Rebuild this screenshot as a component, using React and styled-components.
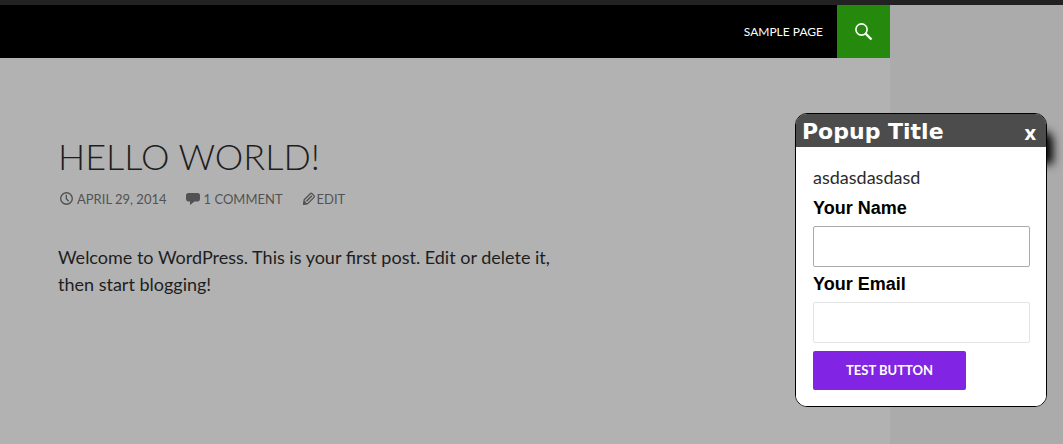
import React from "react";
import styled, { createGlobalStyle } from "styled-components";

const GlobalStyle = createGlobalStyle`
  *, *::before, *::after { box-sizing: border-box; }
  html { background: #ababab; }
  body {
    margin: 0;
    font-family: Lato, "Liberation Sans", sans-serif;
    font-size: 18px;
    color: #1e1e1e;
  }
  h1, h2, p { margin: 0; }
`;

const Page = styled.div`
  display: flex;
  flex-direction: column;
  min-height: 100vh;
`;

const AdminBar = styled.div`
  height: 5px;
  background: #222;
`;

const Site = styled.div`
  flex: 1;
  margin-right: 173px;
  background: #b2b2b2;
`;

const Header = styled.header`
  display: flex;
  justify-content: flex-end;
  height: 53px;
  background: #000;
`;

const Nav = styled.nav`
  display: flex;
  align-items: center;
  padding: 0 14px;
`;

const NavLink = styled.a`
  color: #fff;
  font-size: 12px;
  line-height: 20px;
  text-transform: uppercase;
  text-decoration: none;
`;

const SearchButton = styled.button`
  display: flex;
  align-items: center;
  justify-content: center;
  width: 53px;
  padding: 0;
  border: 0;
  background: #24890d;
  color: #fff;
`;

const Article = styled.article`
  padding: 78px 58px 48px;
`;

const EntryTitle = styled.h1`
  font-size: 36px;
  font-weight: 300;
  line-height: 40px;
  text-transform: uppercase;
`;

const Meta = styled.div`
  display: flex;
  gap: 19px;
  margin-top: 13px;
`;

const MetaLink = styled.a`
  display: flex;
  align-items: center;
  gap: ${(p) => (p.$tight ? "1px" : "3px")};
  color: #525252;
  font-size: 13px;
  line-height: 20px;
  text-transform: uppercase;
  text-decoration: none;
`;

const Content = styled.p`
  max-width: 500px;
  margin-top: 35px;
  line-height: 27px;
`;

const Popup = styled.section`
  position: fixed;
  top: 113px;
  right: 16px;
  width: 252px;
  border: 1px solid #000;
  border-radius: 12px;
  background: #fff;
`;

const PopupHeader = styled.header`
  display: flex;
  align-items: center;
  justify-content: space-between;
  height: 33px;
  padding: 0 10px 0 6px;
  border-radius: 11px 11px 0 0;
  background: #4c4c4c;
  box-shadow: 7px 17px 10px #000;
  color: #fff;
`;

const PopupTitle = styled.h2`
  padding-top: 2px;
  font: bold 22px/31px "DejaVu Sans", sans-serif;
`;

const CloseButton = styled.button`
  padding: 5px 0 0;
  border: 0;
  background: none;
  color: #fff;
  font: bold 20px/28px "Open Sans", sans-serif;
`;

const Form = styled.form`
  display: flex;
  flex-direction: column;
  align-items: flex-start;
  padding: 17px 16px 16px 17px;
  border-radius: 0 0 11px 11px;
  background: #fff;
`;

const Intro = styled.p`
  color: #2b2b2b;
  line-height: 27px;
`;

const Label = styled.label`
  margin-top: 4px;
  color: #000;
  font: bold 18px/27px "Liberation Sans", sans-serif;
`;

const TextInput = styled.input`
  width: 100%;
  height: 41px;
  margin-top: 4px;
  padding: 8px 10px;
  border: 1px solid ${(p) => (p.$active ? "#aaa" : "#e3e3e3")};
  border-radius: 2px;
  background: #fff;
  font: inherit;
  outline: 0;
`;

const SubmitButton = styled.button`
  height: 39px;
  margin-top: 8px;
  padding: 0 33px 2px;
  border: 0;
  border-radius: 2px;
  background: #8224e3;
  color: #fff;
  font: bold 13px/20px Lato, sans-serif;
  text-transform: uppercase;
`;

const SearchIcon = () => (
  <svg width="18" height="18" viewBox="0 0 18 18" fill="none" stroke="currentColor" aria-hidden="true">
    <circle cx="6.500" cy="6.500" r="5.600" strokeWidth="1.600" />
    <path d="M10.500 10.500l6 6" strokeWidth="2.400" />
  </svg>
);

const ClockIcon = () => (
  <svg width="16" height="16" viewBox="0 0 16 16" fill="none" stroke="currentColor" aria-hidden="true">
    <circle cx="8.500" cy="7.500" r="5.800" strokeWidth="1.400" />
    <path d="M8.300 3.800v4l2.400 2.400" strokeWidth="1.300" />
  </svg>
);

const CommentIcon = () => (
  <svg width="15" height="16" viewBox="0 0 15 16" fill="currentColor" aria-hidden="true">
    <path d="M2.500 2H11.500Q14 2 14 4.500V7.500Q14 10.500 11.500 10.500H8.500L4 14V10.500H2.500Q0 10.500 0 7.500V4.500Q0 2 2.500 2z" />
  </svg>
);

const PencilIcon = () => (
  <svg width="14" height="16" viewBox="0 0 14 16" fill="none" stroke="currentColor" aria-hidden="true">
    <path d="M2.200 8.800L8.300 2.700Q9.200 1.800 10.100 2.700L12 4.600Q12.900 5.500 12 6.400L5.900 12.500L1.700 13.200z" strokeWidth="1.300" />
    <path d="M4.400 10.200L9.900 4.700" strokeWidth="1.500" />
    <path d="M1 14l.700-4 1.500 0 .800 1.700 1.700.800 0 .800z" fill="currentColor" stroke="none" />
  </svg>
);

export default function App() {
  return (
    <Page>
      <GlobalStyle />
      <AdminBar />
      <Site>
        <Header>
          <Nav>
            <NavLink href="#sample">Sample Page</NavLink>
          </Nav>
          <SearchButton type="button" aria-label="Search">
            <SearchIcon />
          </SearchButton>
        </Header>
        <Article>
          <EntryTitle>Hello world!</EntryTitle>
          <Meta>
            <MetaLink href="#date"><ClockIcon />April 29, 2014</MetaLink>
            <MetaLink href="#comments"><CommentIcon />1 Comment</MetaLink>
            <MetaLink href="#edit" $tight><PencilIcon />Edit</MetaLink>
          </Meta>
          <Content>
            Welcome to WordPress. This is your first post. Edit or delete it, then start blogging!
          </Content>
        </Article>
      </Site>
      <Popup role="dialog" aria-labelledby="popup-title">
        <PopupHeader>
          <PopupTitle id="popup-title">Popup Title</PopupTitle>
          <CloseButton type="button">x</CloseButton>
        </PopupHeader>
        <Form>
          <Intro>asdasdasdasd</Intro>
          <Label htmlFor="name">Your Name</Label>
          <TextInput id="name" type="text" $active />
          <Label htmlFor="email">Your Email</Label>
          <TextInput id="email" type="email" />
          <SubmitButton type="button">Test Button</SubmitButton>
        </Form>
      </Popup>
    </Page>
  );
}
